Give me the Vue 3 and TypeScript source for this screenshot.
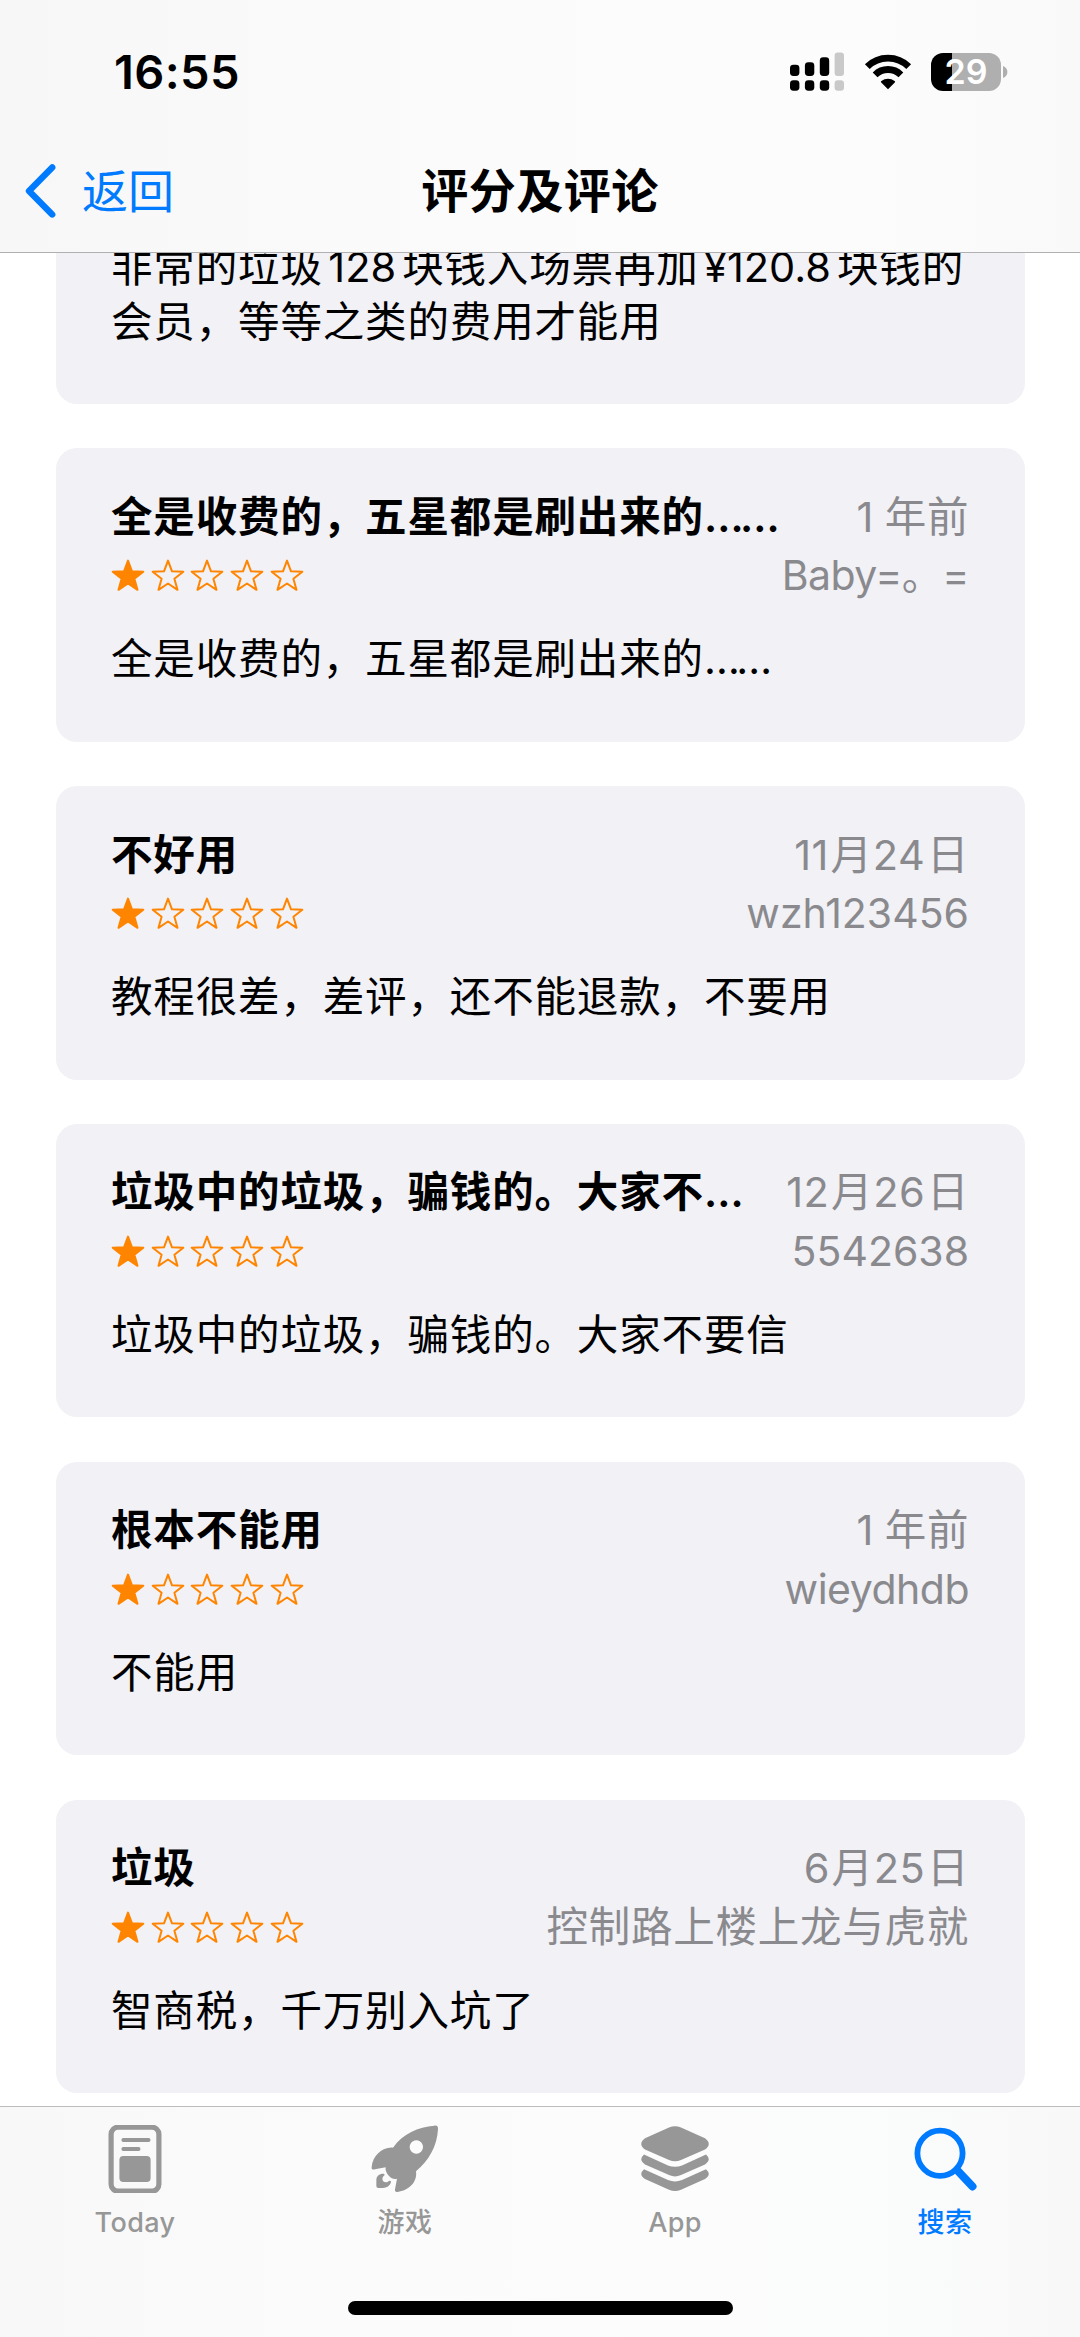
<script setup lang="ts">
interface Review {
  title: string
  date: string
  author: string
  body: string
}

const reviews: Review[] = [
  { title: '全是收费的，五星都是刷出来的……', date: '1 年前', author: 'Baby=。=', body: '全是收费的，五星都是刷出来的……' },
  { title: '不好用', date: '11月24日', author: 'wzh123456', body: '教程很差，差评，还不能退款，不要用' },
  { title: '垃圾中的垃圾，骗钱的。大家不…', date: '12月26日', author: '5542638', body: '垃圾中的垃圾，骗钱的。大家不要信' },
  { title: '根本不能用', date: '1 年前', author: 'wieydhdb', body: '不能用' },
  { title: '垃圾', date: '6月25日', author: '控制路上楼上龙与虎就', body: '智商税，千万别入坑了' },
]

const star = 'M17 1.6 L21 12.3 L32.3 12.7 L23.4 19.8 L26.5 30.8 L17 24.5 L7.5 30.8 L10.6 19.8 L1.7 12.7 L13 12.3 Z'

// Splits a string into digit, double-ellipsis and plain runs, each spaced on its own.
const runs = (s: string): string[] => s.match(/\d+(?! )|……|[^\d…]+|\d+|…/g) ?? []
const runClass = (s: string): string => (/^\d{1,2}$/.test(s) ? 'digits' : s === '……' ? 'dots' : '')
const authorClass = (s: string): string =>
  /^[\u4e00-\u9fff]+$/.test(s) ? 'cjk' : /\d/.test(s) ? '' : 'latin'
</script>

<template>
  <div class="screen">
    <header class="header">
      <div class="status">
        <span class="time">16:55</span>
        <div class="indicators">
          <svg class="signal" width="56" height="40" viewBox="0 0 56 40">
            <g fill="#000">
              <rect x="1" y="12.7" width="9.4" height="11.3" rx="3.4" />
              <rect x="15.9" y="10.2" width="9.4" height="13.8" rx="3.4" />
              <rect x="30.8" y="5.3" width="9.4" height="18.7" rx="3.4" />
              <rect x="1" y="28.3" width="9.4" height="10.4" rx="3.4" />
              <rect x="15.9" y="28.3" width="9.4" height="10.4" rx="3.4" />
              <rect x="30.8" y="28.3" width="9.4" height="10.4" rx="3.4" />
            </g>
            <g fill="#c9c9ca">
              <rect x="45.6" y="0.6" width="9.4" height="23.4" rx="3.2" />
              <rect x="45.6" y="28.3" width="9.4" height="10.4" rx="3.2" />
            </g>
          </svg>
          <svg class="wifi" width="48" height="36" viewBox="0 0 48 36">
            <g fill="none" stroke="#000" stroke-width="6.8">
              <path d="M3.3 12.6 A29.4 29.4 0 0 1 44.7 12.6" />
              <path d="M11.1 20.8 A18.4 18.4 0 0 1 36.9 20.8" />
            </g>
            <path d="M24 35.2 L17 28.2 Q16.6 27.6 17.4 27 A10.6 10.6 0 0 1 30.6 27 Q31.4 27.6 31 28.2 Z" fill="#000" />
          </svg>
          <div class="battery">
            <span class="level">29</span>
            <svg class="nub" width="5" height="12" viewBox="0 0 5 12"><path d="M0 0 Q4.4 1.8 4.4 6 T0 12Z" fill="#afafb0" /></svg>
          </div>
        </div>
      </div>
      <nav class="nav">
        <div class="back">
          <svg width="34" height="56" viewBox="0 0 34 56">
            <path d="M29.2 4.4 L6 27.9 L29.2 51.4" fill="none" stroke="#007aff" stroke-width="6.4" stroke-linecap="round" stroke-linejoin="round" />
          </svg>
          <span>返回</span>
        </div>
        <h1>评分及评论</h1>
        <div class="back-balance"></div>
      </nav>
    </header>

    <main class="list">
      <article class="card first">
        <p class="body"><span>非常的垃圾</span><span class="num">128</span><span>块钱入场票再加</span><span class="num">¥120.8</span><span>块钱的</span><br />会员，等等之类的费用才能用</p>
      </article>
      <article v-for="r in reviews" :key="r.title" class="card">
        <div class="row heading">
          <h2><span v-for="(t, i) in runs(r.title)" :key="i" :class="runClass(t)">{{ t }}</span></h2>
          <span class="meta" :class="{ relative: r.date.includes(' ') }"><span v-for="(t, i) in runs(r.date)" :key="i" :class="runClass(t)">{{ t }}</span></span>
        </div>
        <div class="row">
          <div class="stars">
            <svg v-for="n in 5" :key="n" width="34" height="33" viewBox="0 0 34 33">
              <path :d="star" :fill="n === 1 ? '#ff8500' : 'none'" stroke="#ff8500" stroke-width="2" stroke-linejoin="round" />
            </svg>
          </div>
          <span class="meta author" :class="authorClass(r.author)">{{ r.author }}</span>
        </div>
        <p class="body"><span v-for="(t, i) in runs(r.body)" :key="i" :class="runClass(t)">{{ t }}</span></p>
      </article>
    </main>

    <footer class="tabbar">
      <div class="tabs">
        <div class="tab">
          <svg width="68" height="68" viewBox="0 0 68 68">
            <rect x="10.1" y="2.2" width="47.8" height="64" rx="7" fill="none" stroke="#979797" stroke-width="5.2" />
            <path d="M22.3 15 H47.6 M22.3 24 H37.6" stroke="#979797" stroke-width="3.8" stroke-linecap="round" />
            <rect x="18.4" y="31" width="31.2" height="26" rx="4" fill="#979797" />
          </svg>
          <span>Today</span>
        </div>
        <div class="tab">
          <svg width="68" height="68" viewBox="93 73 204 204">
            <g fill="#979797">
              <path fill-rule="evenodd" d="M283 75 C235 78 188 99 159 141 C128 138 98 165 95 199 C94 206 98 208 105 206 L137 200 C135 208 140 219 147 226 C154 234 163 237 171 234 L165 266 C164 272 167 275 173 274 C205 270 233 246 228 212 C267 180 291 137 294 86 C295 77 291 74 283 75 Z M229 119 a20 20 0 1 0 .1 0 Z" />
              <path d="M130 219 C117 219 109 226 109 239 L109 256 Q109 262 115 262 L129 262 C143 262 153 252 153 242 C147 236 145 245 138 245 C125 245 124 229 134 223 Q133 219 130 219 Z" />
            </g>
          </svg>
          <span>游戏</span>
        </div>
        <div class="tab">
          <svg width="68" height="68" viewBox="0 -1 68 68">
            <g fill="#979797">
              <path d="M28 1.6 Q34 -1 40 1.6 L64 12.3 Q71.5 18 64 23.6 L40 34 Q34 36.6 28 34 L4 23.6 Q-3.5 18 4 12.3 Z" />
              <path id="band" d="M3 28.6 L27 39.4 Q34 42.2 41 39.4 L65 28.6 Q71 34 64 38.4 L40 49 Q34 51.8 28 49 L4 38.4 Q-3 34 3 28.6 Z" />
              <use href="#band" y="14.7" />
            </g>
          </svg>
          <span>App</span>
        </div>
        <div class="tab active">
          <svg width="68" height="68" viewBox="0 0 68 68">
            <circle cx="29" cy="28.2" r="22.6" fill="none" stroke="#007aff" stroke-width="5.8" />
            <path d="M46 45 L61.5 61.4" stroke="#007aff" stroke-width="8" stroke-linecap="round" />
          </svg>
          <span>搜索</span>
        </div>
      </div>
      <div class="home-indicator"></div>
    </footer>
  </div>
</template>

<style>
body {
  margin: 0;
  background: #fff;
}
</style>

<style scoped>
.screen {
  width: 1080px;
  height: 2337px;
  display: flex;
  flex-direction: column;
  overflow: hidden;
  background: #fff;
  color: #000;
  font-family: Inter, 'Noto Sans CJK SC', sans-serif;
}
.header {
  flex: none;
  box-sizing: border-box;
  height: 253px;
  border-bottom: 1px solid #b0b0b2;
  background: linear-gradient(90deg, #f7f7f7 0%, #fafafa 30%, #fcfcfd 60%, #fcfcfd 80%, #f9f9f9 100%);
}
.status {
  height: 143px;
  box-sizing: border-box;
  padding: 0 79px 0 114px;
  display: flex;
  justify-content: space-between;
  align-items: center;
}
.time {
  font-size: 47px;
  font-weight: 600;
  letter-spacing: 0.4px;
}
.indicators {
  display: flex;
  align-items: center;
}
.wifi {
  margin-left: 19px;
}
.battery {
  position: relative;
  width: 70px;
  height: 38px;
  margin-left: 19px;
  border-radius: 12px;
  background: linear-gradient(90deg, #000 21px, #afafb0 21px);
  display: flex;
  align-items: center;
  justify-content: center;
}
.level {
  color: #fff;
  font-size: 34px;
  font-weight: 600;
  line-height: 38px;
}
.nub {
  position: absolute;
  left: 72px;
  top: 13px;
}
.nav {
  height: 95px;
  padding: 0 23px;
  display: flex;
  align-items: center;
  justify-content: space-between;
}
.back,
.back-balance {
  width: 260px;
}
.back {
  display: flex;
  align-items: center;
  gap: 25px;
  color: #007aff;
  font-size: 46px;
}
.back span {
  padding-bottom: 6px;
}
h1 {
  margin: 0;
  font-size: 47px;
  font-weight: 600;
  letter-spacing: 0.5px;
  line-height: 60px;
}
.list {
  flex: 1;
  min-height: 0;
  overflow: hidden;
  box-sizing: border-box;
  padding: 0 55.5px 13px;
  display: flex;
  flex-direction: column;
  justify-content: flex-end;
  gap: 44.3px;
}
.card {
  flex: none;
  box-sizing: border-box;
  height: 293.5px;
  padding: 40px 55.5px 0;
  border-radius: 21px;
  background: #f1f1f6;
}
.card.first {
  padding-top: 129px;
}
.row {
  height: 59px;
  display: flex;
  justify-content: space-between;
  align-items: center;
  white-space: nowrap;
}
.row.heading {
  height: 58px;
}
h2 {
  margin: 0;
  font-size: 41.5px;
  font-weight: 600;
  line-height: 59px;
  letter-spacing: 0.85px;
}
.meta {
  font-size: 41.5px;
  line-height: 59px;
  color: #8a8a8e;
  letter-spacing: 0.6px;
  white-space: pre;
}
.meta .digits {
  margin-right: 1.5px;
}
.meta.relative .digits {
  margin-right: -1.5px;
}
.author {
  font-size: 41px;
  letter-spacing: 0;
}
.author.latin {
  letter-spacing: -0.5px;
}
.author.cjk {
  font-size: 41.5px;
  letter-spacing: 0.75px;
}
.dots {
  letter-spacing: -3.6px;
}
.stars {
  display: flex;
  gap: 5.7px;
}
.stars svg {
  display: block;
}
.body {
  margin: 27px 0 0;
  font-size: 41.5px;
  line-height: 55.4px;
  letter-spacing: 0.85px;
  white-space: nowrap;
}
.first .body {
  margin-top: 0;
}
.num {
  margin: 0 6px 0 5.5px;
  letter-spacing: 0;
}
.tabbar {
  flex: none;
  box-sizing: border-box;
  height: 231px;
  border-top: 1px solid #bcbcbe;
  background: linear-gradient(90deg, #f8f8f8 0%, #fbfbfb 30%, #fcfcfd 60%, #fbfcfc 80%, #f8f8f8 100%);
}
.tabs {
  display: flex;
  padding-top: 18px;
}
.tab {
  flex: 1;
  display: flex;
  flex-direction: column;
  align-items: center;
  color: #979797;
  font-size: 27px;
  font-weight: 500;
}
.tab svg {
  display: block;
}
.tab span {
  margin-top: 10px;
  line-height: 40px;
  letter-spacing: 0.4px;
}
.tab.active {
  color: #007aff;
}
.home-indicator {
  width: 385px;
  height: 14px;
  margin: 58px auto 0;
  border-radius: 7px;
  background: #000;
}
</style>
